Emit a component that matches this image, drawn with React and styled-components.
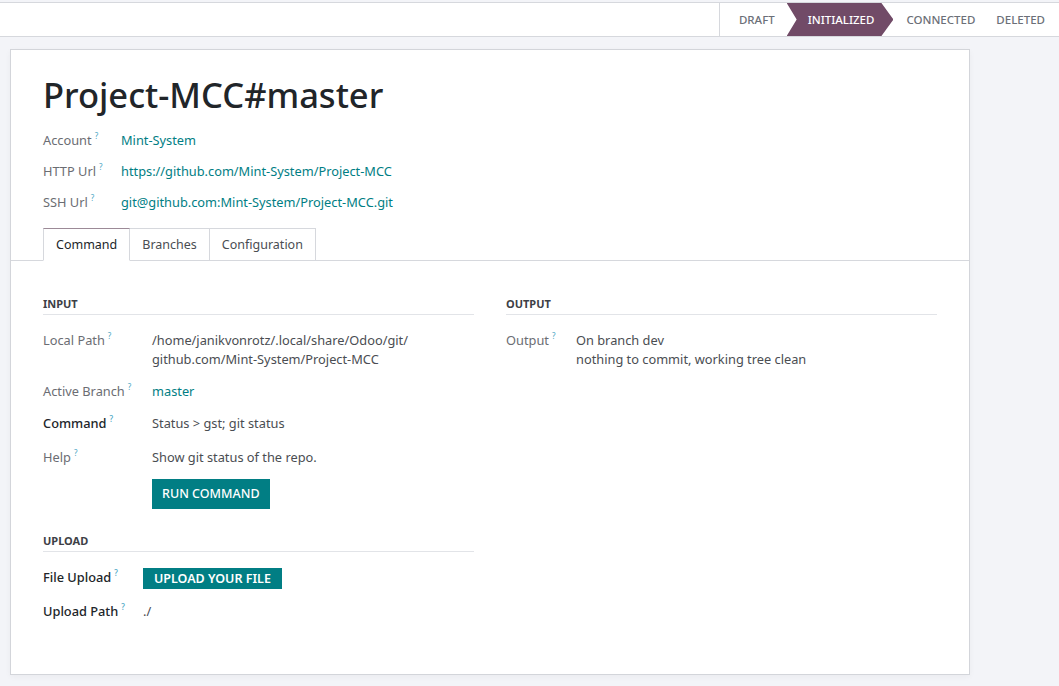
import React from "react";
import styled, { createGlobalStyle } from "styled-components";

const GlobalStyle = createGlobalStyle`
  html, body {
    margin: 0;
    padding: 0;
    background: #f3f4f8;
    font-family: "Noto Sans", "Open Sans", sans-serif;
    color: #212529;
  }
`;

const stages = [
  { name: "Draft", pl: 19, pr: 12 },
  { name: "Initialized", pl: 21, pr: 19, active: true },
  { name: "Connected", pl: 13, pr: 10 },
  { name: "Deleted", pl: 11, pr: 14 },
];

const App = () => {
  return (
    <>
      <GlobalStyle />
      <Page>
        <StatusBar>
          <Stages>
            {stages.map((s, i) => (
              <React.Fragment key={s.name}>
                <Stage $active={s.active} $first={i === 0} $pl={s.pl} $pr={s.pr}>
                  {s.name}
                </Stage>
                {i > 0 && i < stages.length - 1 && !s.active && !stages[i - 1].active && (
                  <Chevron width="12" height="33" viewBox="0 0 12 33">
                    <polyline points="0.5,0 11,16.5 0.5,33" fill="none" stroke="#d6d8dd" strokeWidth="1" />
                  </Chevron>
                )}
              </React.Fragment>
            ))}
          </Stages>
        </StatusBar>

        <Sheet>
          <Head>
            <Title>Project-MCC#master</Title>
            <FieldGrid $labelWidth={78}>
              <Label>Account<Help>?</Help></Label>
              <Value $link>Mint-System</Value>
              <Label>HTTP Url<Help>?</Help></Label>
              <Value $link>https://github.com/Mint-System/Project-MCC</Value>
              <Label>SSH Url<Help>?</Help></Label>
              <Value $link>git@github.com:Mint-System/Project-MCC.git</Value>
            </FieldGrid>
          </Head>

          <Tabs>
            <Tab $active>Command</Tab>
            <Tab>Branches</Tab>
            <Tab>Configuration</Tab>
          </Tabs>

          <TabBody>
            <Columns>
              <Group>
                <GroupTitle>Input</GroupTitle>
                <FieldGrid $labelWidth={109} $tight>
                  <Label>Local Path<Help>?</Help></Label>
                  <Value>
                    /home/janikvonrotz/.local/share/Odoo/git/
                    <br />
                    github.com/Mint-System/Project-MCC
                  </Value>
                  <Label>Active Branch<Help>?</Help></Label>
                  <Value $link>master</Value>
                  <Label $strong>Command<Help>?</Help></Label>
                  <Value>Status &gt; gst; git status</Value>
                  <Label $push>Help<Help>?</Help></Label>
                  <Value $push>Show git status of the repo.</Value>
                  <span />
                  <Value>
                    <RunButton>Run Command</RunButton>
                  </Value>
                </FieldGrid>

                <GroupTitle $spaced>Upload</GroupTitle>
                <FieldGrid $labelWidth={100} $tight>
                  <Label $strong>File Upload<Help>?</Help></Label>
                  <Value>
                    <UploadButton>Upload your file</UploadButton>
                  </Value>
                  <Label $strong>Upload Path<Help>?</Help></Label>
                  <Value>./</Value>
                </FieldGrid>
              </Group>

              <Group>
                <GroupTitle>Output</GroupTitle>
                <FieldGrid $labelWidth={70} $tight>
                  <Label>Output<Help>?</Help></Label>
                  <Value>
                    On branch dev
                    <br />
                    nothing to commit, working tree clean
                  </Value>
                </FieldGrid>
              </Group>
            </Columns>
          </TabBody>
        </Sheet>
      </Page>
    </>
  );
};

export default App;

const Page = styled.div`
  min-height: 686px;
  padding-top: 2px;
  box-sizing: border-box;
`;

const StatusBar = styled.div`
  height: 33px;
  background: #fff;
  border-top: 1px solid #d6d8dd;
  border-bottom: 1px solid #d6d8dd;
  display: flex;
  justify-content: flex-end;
`;

const Stages = styled.div`
  display: flex;
  align-items: stretch;
`;

const Stage = styled.div`
  display: flex;
  align-items: center;
  padding: 0 ${(p) => p.$pr}px 0 ${(p) => p.$pl}px;
  font-size: 11.5px;
  font-weight: 500;
  text-transform: uppercase;
  color: ${(p) => (p.$active ? "#fff" : "#6b6f78")};
  background: ${(p) => (p.$active ? "#714b67" : "transparent")};
  border-left: ${(p) => (p.$first ? "1px solid #d6d8dd" : "none")};
  clip-path: ${(p) =>
    p.$active
      ? "polygon(0 0, calc(100% - 12px) 0, 100% 50%, calc(100% - 12px) 100%, 0 100%, 10px 50%)"
      : "none"};
`;

const Chevron = styled.svg`
  display: block;
  flex: none;
`;

const Sheet = styled.div`
  width: 960px;
  margin: 12px 0 0 10px;
  box-sizing: border-box;
  height: 626px;
  background: #fff;
  border: 1px solid #d3d5da;
  box-shadow: 0 2px 6px rgba(0, 0, 0, 0.04);
`;

const Head = styled.div`
  padding: 23px 32px 0;
`;

const Title = styled.h1`
  margin: 0 0 13px;
  font-size: 34.5px;
  font-weight: 500;
  line-height: 1.3;
  color: #212529;
`;

const FieldGrid = styled.div`
  display: grid;
  grid-template-columns: ${(p) => p.$labelWidth}px 1fr;
  row-gap: ${(p) => (p.$tight ? 13 : 12)}px;
  align-items: start;
  font-size: 12.8px;
  line-height: 19px;
`;

const Label = styled.div`
  color: ${(p) => (p.$strong ? "#212529" : "#6b6d73")};
  font-weight: ${(p) => (p.$strong ? 500 : 400)};
  white-space: nowrap;
  margin-top: ${(p) => (p.$push ? 2 : 0)}px;
`;

const Help = styled.sup`
  color: #4aa6c4;
  font-size: 8px;
  margin-left: 3px;
  vertical-align: 6px;
  line-height: 0;
`;

const Value = styled.div`
  color: ${(p) => (p.$link ? "#017e84" : "#4a4d52")};
  margin-top: ${(p) => (p.$push ? 2 : 0)}px;
`;

const Tabs = styled.div`
  display: flex;
  margin-top: 16px;
  padding: 0 32px;
  border-bottom: 1px solid #d6d8dd;
`;

const Tab = styled.div`
  height: 31px;
  display: flex;
  align-items: center;
  padding: 0 12px;
  margin-bottom: -1px;
  font-size: 12.5px;
  color: ${(p) => (p.$active ? "#212529" : "#4a4d52")};
  background: #fff;
  border: 1px solid #d6d8dd;
  border-top-color: ${(p) => (p.$active ? "#9c8a97" : "#d6d8dd")};
  border-bottom-color: ${(p) => (p.$active ? "#fff" : "#d6d8dd")};
  & + & {
    border-left: none;
  }
`;

const TabBody = styled.div`
  padding: 35px 32px 0;
`;

const Columns = styled.div`
  display: grid;
  grid-template-columns: 431px 431px;
  column-gap: 32px;
`;

const Group = styled.div`
  display: flex;
  flex-direction: column;
`;

const GroupTitle = styled.div`
  font-size: 11px;
  font-weight: 700;
  text-transform: uppercase;
  color: #3d4046;
  padding-bottom: 2px;
  border-bottom: 1px solid #e2e4e8;
  margin: ${(p) => (p.$spaced ? "24px 0 16px" : "0 0 16px")};
  line-height: 16px;
`;

const RunButton = styled.button`
  margin-top: -1px;
  height: 30px;
  padding: 0 10px;
  border: none;
  background: #017e84;
  color: #fff;
  font-family: inherit;
  font-size: 12.5px;
  font-weight: 500;
  text-transform: uppercase;
  cursor: pointer;
`;

const UploadButton = styled(RunButton)`
  margin-top: 0;
  height: 21px;
  padding: 0 11px;
  font-size: 12.5px;
  font-weight: 600;
`;
